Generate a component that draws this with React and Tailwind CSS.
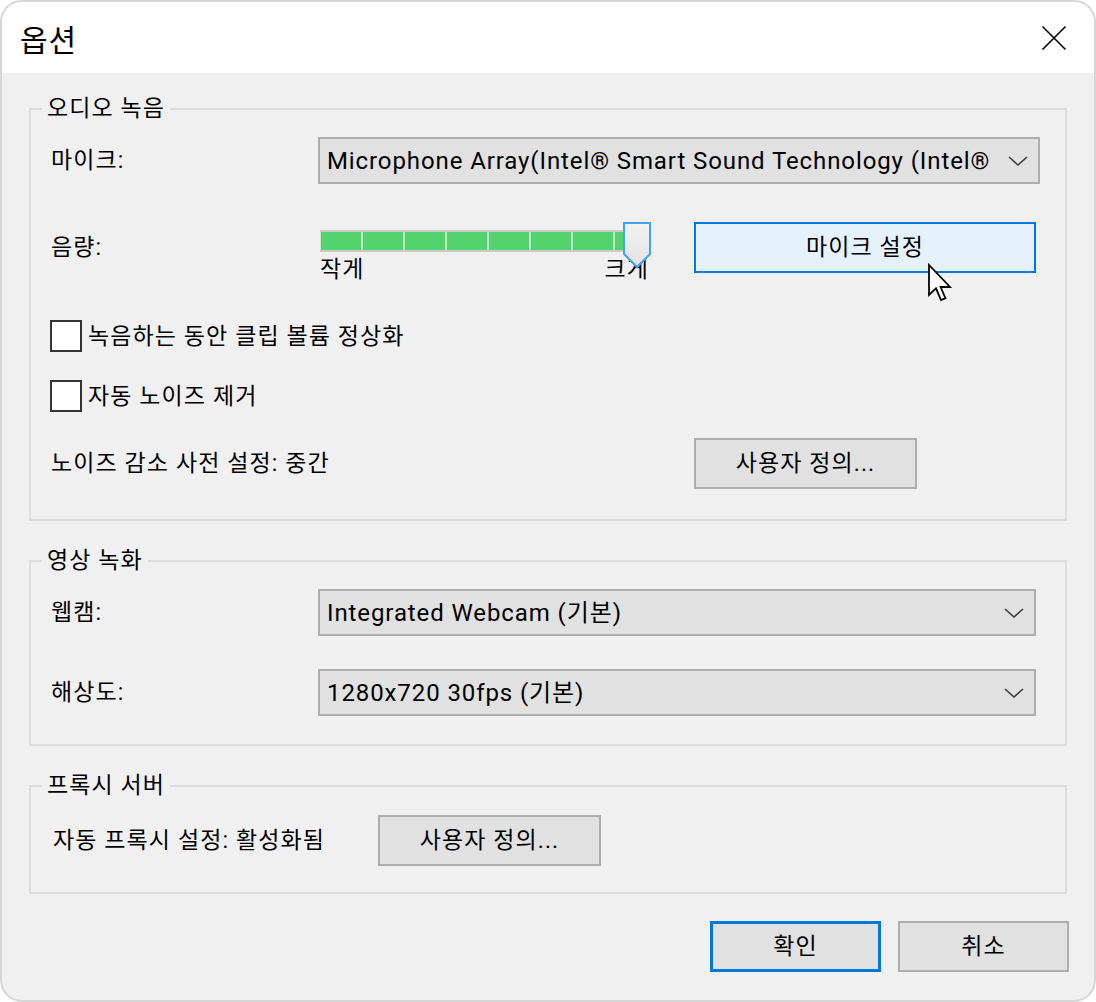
import React from 'react';

// shared text look (Malgun-like wide hangul)
const KO = 'text-[23px] tracking-[1.1px] leading-none';

// --- Small pieces ---
const Chevron = () => (
    <svg width="20" height="10" viewBox="0 0 20 10" className="shrink-0">
        <path d="M1 1 L10 9 L19 1" fill="none" stroke="#3c3c3c" strokeWidth="1.6" />
    </svg>
);

const Combo = ({ width, text }) => (
    <div
        className="h-[47px] flex items-center border-2 border-[#adadad] bg-[#e1e1e1] pl-[7px] pr-[10px]"
        style={{ width }}
    >
        <span className="flex-1 overflow-hidden whitespace-nowrap text-[24px] tracking-[0.9px] leading-[34px]">{text}</span>
        <span className="pl-[12px]"><Chevron /></span>
    </div>
);

const Button = ({ children, className = '' }) => (
    <button className={`h-[51px] flex items-center justify-center ${KO} ${className}`}>
        {children}
    </button>
);

const Checkbox = ({ label }) => (
    <div className="flex items-center -ml-[1px]">
        <div className="w-[32px] h-[32px] border-2 border-[#333333] bg-white" />
        <span className={`ml-[6px] ${KO}`}>{label}</span>
    </div>
);

const Group = ({ title, className = '', children }) => (
    <fieldset className={`border-2 border-[#dcdcdc] pl-[20px] ${className}`}>
        <legend className="-ml-[9px] px-[5px] text-[23px] tracking-[1.1px] leading-[22px]">{title}</legend>
        {children}
    </fieldset>
);

const VolumeSlider = () => (
    <div className="relative w-[336px] h-[60px] pl-[2px]">
        <div className="mt-[8px] w-[331px] h-[22px] border-y-2 border-[#cbcbcb] bg-[#c3eacb] overflow-hidden flex gap-[2px] pl-[1px]">
            {Array.from({ length: 8 }).map((_, i) => (
                <div key={i} className="w-[40px] h-full shrink-0 bg-[#52d36e]" />
            ))}
        </div>
        <div className="w-[331px] flex justify-between text-[23px] tracking-[1.1px] leading-[36px]">
            <span>작게</span>
            <span className="mr-[2px]">크게</span>
        </div>
        <svg width="28" height="47" viewBox="0 0 28 47" className="absolute left-[305px] top-0">
            <defs>
                <linearGradient id="thumbFill" x1="0" y1="0" x2="0" y2="1">
                    <stop offset="0" stopColor="#f3f3f3" />
                    <stop offset="1" stopColor="#e2e2e2" />
                </linearGradient>
            </defs>
            <path d="M1 1 H27 V32 L14 45 L1 32 Z" fill="url(#thumbFill)" stroke="#45a2f0" strokeWidth="2" />
        </svg>
    </div>
);

const Cursor = () => (
    <svg width="26" height="40" viewBox="0 0 13 20" className="absolute left-[927px] top-[263px]">
        <path
            d="M1 1 L1 16 L4.5 12.7 L7 18.5 L9.2 17.6 L6.8 12 L11.5 12 Z"
            fill="#ffffff"
            stroke="#000000"
            strokeWidth="0.9"
            strokeLinejoin="miter"
        />
    </svg>
);

// --- Page ---
export default function App() {
    return (
        <div className="relative w-[1096px] h-[1002px] bg-white text-black font-[Roboto,'Noto_Sans_CJK_KR',sans-serif]">
            <div className="h-full rounded-[22px] border-2 border-[#d6d6d6] bg-[#f0f0f0] overflow-hidden flex flex-col">
                {/* Title bar */}
                <div className="h-[71px] shrink-0 bg-white flex items-center justify-between pl-[18px] pr-[27px]">
                    <span className="text-[30px] tracking-[1px] leading-none font-['Noto_Sans_CJK_KR',sans-serif]">옵션</span>
                    <svg width="26" height="26" viewBox="0 0 26 26">
                        <path d="M1.5 1.5 L24.5 24.5 M24.5 1.5 L1.5 24.5" stroke="#000" strokeWidth="1.6" />
                    </svg>
                </div>

                {/* Body */}
                <div className="flex-1 px-[27px] pt-[25px]">
                    <Group title="오디오 녹음" className="pt-[17px] pb-[30px]">
                        <div className="flex items-center h-[47px]">
                            <span className={`w-[267px] ${KO}`}>마이크:</span>
                            <Combo
                                width="722px"
                                text="Microphone Array(Intel® Smart Sound Technology (Intel® SST))"
                            />
                        </div>

                        <div className="flex items-start mt-[38px] h-[51px]">
                            <span className={`w-[267px] h-[51px] flex items-center ${KO}`}>음량:</span>
                            <VolumeSlider />
                            <Button className="ml-[40px] w-[342px] border-2 border-[#0078d7] bg-[#e5f1fb]">
                                마이크 설정
                            </Button>
                        </div>

                        <div className="mt-[47px]">
                            <Checkbox label="녹음하는 동안 클립 볼륨 정상화" />
                        </div>
                        <div className="mt-[28px]">
                            <Checkbox label="자동 노이즈 제거" />
                        </div>

                        <div className="flex items-center mt-[26px]">
                            <span className={`w-[643px] ${KO}`}>노이즈 감소 사전 설정: 중간</span>
                            <Button className="w-[223px] border-2 border-[#adadad] bg-[#e1e1e1]">사용자 정의...</Button>
                        </div>
                    </Group>

                    <Group title="영상 녹화" className="mt-[29px] pt-[17px] pb-[28px]">
                        <div className="flex items-center">
                            <span className={`w-[267px] ${KO}`}>웹캠:</span>
                            <Combo width="718px" text="Integrated Webcam (기본)" />
                        </div>
                        <div className="flex items-center mt-[33px]">
                            <span className={`w-[267px] ${KO}`}>해상도:</span>
                            <Combo width="718px" text="1280x720 30fps (기본)" />
                        </div>
                    </Group>

                    <Group title="프록시 서버" className="mt-[29px] pt-[18px] pb-[26px]">
                        <div className="flex items-center">
                            <span className={`w-[327px] pl-[2px] ${KO}`}>자동 프록시 설정: 활성화됨</span>
                            <Button className="w-[223px] border-2 border-[#adadad] bg-[#e1e1e1]">사용자 정의...</Button>
                        </div>
                    </Group>

                    <div className="flex justify-end gap-[17px] mt-[27px] -mr-[2px]">
                        <Button className="w-[171px] border-[3px] border-[#0078d7] bg-[#e1e1e1]">확인</Button>
                        <Button className="w-[171px] border-2 border-[#adadad] bg-[#e1e1e1]">취소</Button>
                    </div>
                </div>
            </div>
            <Cursor />
        </div>
    );
}
